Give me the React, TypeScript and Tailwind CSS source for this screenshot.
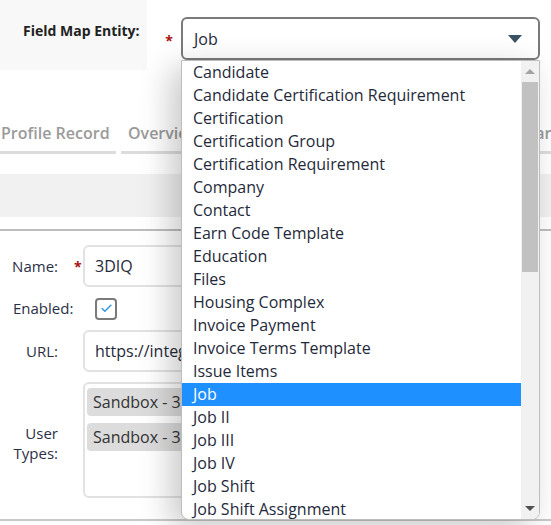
import { Check } from "lucide-react";

const entities = [
  "Candidate",
  "Candidate Certification Requirement",
  "Certification",
  "Certification Group",
  "Certification Requirement",
  "Company",
  "Contact",
  "Earn Code Template",
  "Education",
  "Files",
  "Housing Complex",
  "Invoice Payment",
  "Invoice Terms Template",
  "Issue Items",
  "Job",
  "Job II",
  "Job III",
  "Job IV",
  "Job Shift",
  "Job Shift Assignment",
];

const EntityDropdown = ({ selected }: { selected: string }) => {
  return (
    <div className="absolute left-[181px] top-[60px] w-[359px] h-[460px] bg-white border border-[#bdbdbd] rounded-b-[8px] overflow-hidden shadow-[-10px_8px_32px_rgba(0,0,0,0.22)] flex">
      <ul className="flex-1">
        {entities.map((name) => (
          <li
            key={name}
            className={
              name === selected
                ? "h-[23px] leading-[23px] pl-[11px] bg-[#1e90ff] text-white whitespace-nowrap"
                : "h-[23px] leading-[23px] pl-[11px] text-[#1f2a3a] whitespace-nowrap"
            }
          >
            {name}
          </li>
        ))}
      </ul>
      {/* Scrollbar */}
      <div className="w-[18px] bg-[#f1f1f1] flex flex-col items-center">
        <div className="h-[21px] flex items-center justify-center">
          <div className="w-0 h-0 border-l-[5px] border-r-[5px] border-b-[5px] border-l-transparent border-r-transparent border-b-[#a3a3a3]" />
        </div>
        <div className="w-[16px] h-[190px] bg-[#c1c1c1]" />
        <div className="flex-1" />
        <div className="h-[21px] flex items-center justify-center">
          <div className="w-0 h-0 border-l-[5px] border-r-[5px] border-t-[5px] border-l-transparent border-r-transparent border-t-[#505050]" />
        </div>
      </div>
    </div>
  );
};

const FormLabel = ({ children, wide }: { children: React.ReactNode; wide?: boolean }) => (
  <div
    className={
      wide
        ? "w-[70px] shrink-0 pl-[13px] text-left whitespace-nowrap text-[15px] text-[#2a2f45]"
        : "w-[58px] shrink-0 text-right text-[15px] text-[#2a2f45] leading-[20px]"
    }
  >
    {children}
  </div>
);

const App = () => {
  return (
    <div className="relative w-[551px] h-[525px] overflow-hidden bg-white font-['Open_Sans',sans-serif] text-[16px]">
      {/* Header */}
      <div className="flex h-[70px]">
        <div className="w-[147px] shrink-0 h-[70px] bg-[#f8f8f8] pl-[23px] pt-[20px] text-[14px] font-bold text-[#222]">
          Field Map Entity:
        </div>
        <div className="flex pt-[17px]">
          <span className="w-[34px] shrink-0 pt-[14px] pr-[8px] text-right text-[#a11] text-[14px] font-bold leading-[20px]">*</span>
          <div className="w-[359px] shrink-0 h-[43px] border-2 border-[#7a7a7a] rounded-[6px] bg-white flex items-center justify-between pl-[11px] pr-[16px] text-[#1f2a3a]">
            <span>Job</span>
            <div className="w-0 h-0 border-l-[7px] border-r-[7px] border-t-[8px] border-l-transparent border-r-transparent border-t-[#3a5266]" />
          </div>
        </div>
      </div>

      {/* Tabs */}
      <div className="flex mt-[51px] text-[16px] font-semibold text-[#9a9a9a]">
        <div className="w-[116px] shrink-0 pl-[1px] pb-[6px] border-b-[3px] border-[#dcdcdc] whitespace-nowrap">Profile Record</div>
        <div className="w-[349px] shrink-0 ml-[5px] pl-[7px] pb-[6px] border-b-[3px] border-[#dcdcdc] whitespace-nowrap">Overview</div>
        <div className="w-[120px] shrink-0 ml-[5px] pl-[7px] pb-[6px] border-b-[3px] border-[#dcdcdc] whitespace-nowrap">Calendar</div>
      </div>

      {/* Band */}
      <div className="mt-[20px] h-[43px] bg-[#f1f1f1]" />
      <div className="mt-[12px] border-t-2 border-[#bdbdbd]" />

      {/* Form */}
      <div className="pt-[14px] flex flex-col">
        <div className="flex items-center h-[42px]">
          <FormLabel>Name:</FormLabel>
          <span className="w-[25px] shrink-0 pl-[16px] text-[#a11] text-[14px] font-bold">*</span>
          <div className="w-[400px] shrink-0 h-[42px] border-2 border-[#e2e2e2] rounded-[6px] flex items-center pl-[10px] text-[#1f2a3a]">3DIQ</div>
        </div>
        <div className="flex items-center h-[43px]">
          <FormLabel wide>Enabled:</FormLabel>
          <div className="ml-[25px] w-[22px] h-[22px] border-2 border-[#7a7a7a] rounded-[4px] flex items-center justify-center">
            <Check size={13} strokeWidth={3} className="text-[#3b9be0]" />
          </div>
        </div>
        <div className="flex items-center h-[42px]">
          <FormLabel>URL:</FormLabel>
          <div className="ml-[25px] w-[400px] shrink-0 h-[42px] border-2 border-[#e2e2e2] rounded-[6px] flex items-center pl-[10px] text-[#1f2a3a] whitespace-nowrap overflow-hidden">
            https://integration.example.com/api
          </div>
        </div>
        <div className="flex items-center mt-[10px] h-[116px]">
          <div className="pt-[6px]">
            <FormLabel>User Types:</FormLabel>
          </div>
          <div className="ml-[25px] w-[400px] shrink-0 h-[116px] border-2 border-[#e2e2e2] rounded-[6px] pt-[4px] pl-[2px] flex flex-col gap-[7px]">
            <div className="w-[300px] h-[28px] bg-[#dcdcdc] rounded-[4px] pl-[6px] flex items-center text-[#333] whitespace-nowrap">Sandbox - 3DIQ Recruiter</div>
            <div className="w-[300px] h-[28px] bg-[#dcdcdc] rounded-[4px] pl-[6px] flex items-center text-[#333] whitespace-nowrap">Sandbox - 3DIQ Manager</div>
          </div>
        </div>
        <div className="mt-[21px] border-t-2 border-[#c8c8c8]" />
      </div>

      <EntityDropdown selected="Job" />
    </div>
  );
};

export default App;
